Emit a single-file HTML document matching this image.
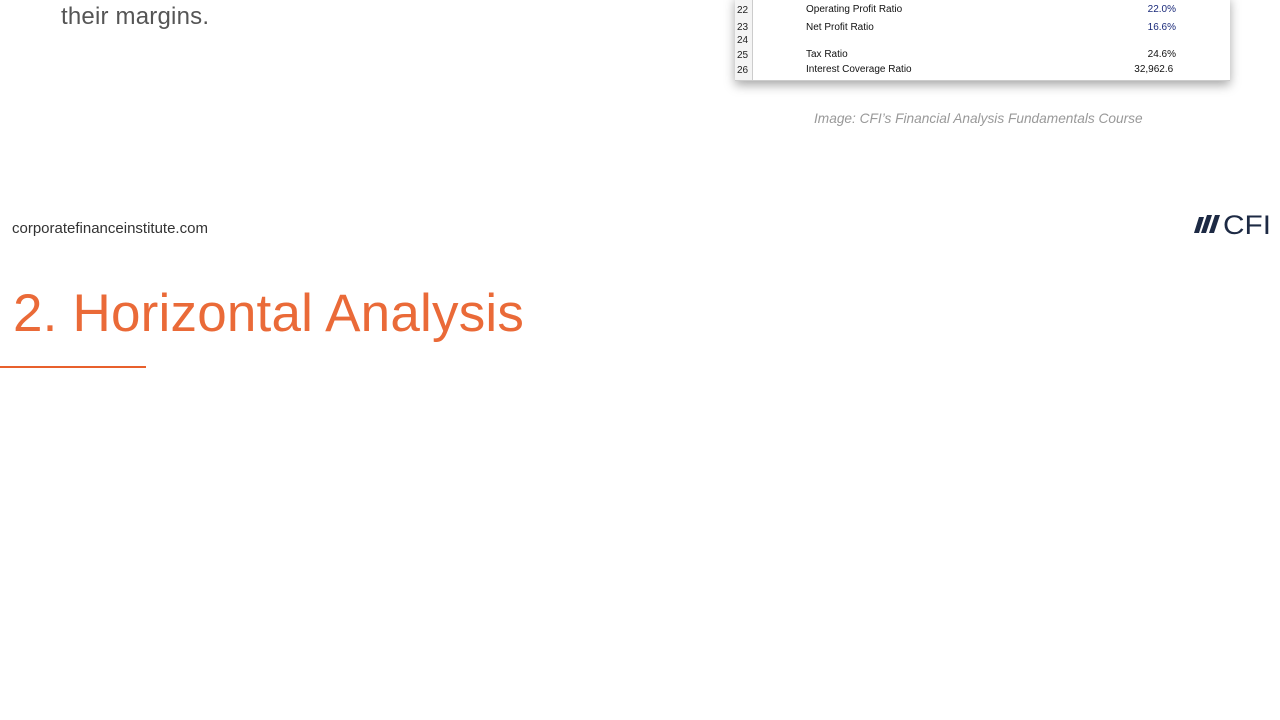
<!DOCTYPE html>
<html><head><meta charset="utf-8"><style>
html,body{margin:0;padding:0;width:1280px;height:720px;background:#fff;overflow:hidden;position:relative;font-family:"Liberation Sans",sans-serif}
.a{position:absolute;white-space:nowrap}
</style></head><body>
<div class="a" style="left:61px;top:3px;font-size:24px;color:#555;letter-spacing:0.2px">their margins.</div>
<div class="a" style="left:735px;top:-4px;width:495px;height:84px;background:#fff;box-shadow:0 4px 10px rgba(0,0,0,0.35);border-bottom:1px solid #ccc"></div>
<div class="a" style="left:735px;top:0;width:17px;height:80px;background:#f4f4f4;border-right:1px solid #ccc"></div>
<div class="a" style="left:737px;top:2px;font-size:10px;color:#222;line-height:17px">22<br>23</div>
<div class="a" style="left:737px;top:33px;font-size:10px;color:#222;line-height:15px">24<br>25<br>26</div>
<div class="a" style="left:806px;top:1px;font-size:10px;color:#111;line-height:17.5px">Operating Profit Ratio<br>Net Profit Ratio</div>
<div class="a" style="left:806px;top:47px;font-size:10px;color:#111;line-height:15px">Tax Ratio<br>Interest Coverage Ratio</div>
<div class="a" style="left:1120px;top:1px;width:56px;text-align:right;font-size:10px;color:#1a2a7a;line-height:17.5px">22.0%<br>16.6%</div>
<div class="a" style="left:1100px;top:47px;width:76px;text-align:right;font-size:10px;color:#111;line-height:15px">24.6%<br>32,962.6&nbsp;</div>
<div class="a" style="left:814px;top:111px;font-size:13.7px;font-style:italic;color:#999">Image: CFI’s Financial Analysis Fundamentals Course</div>
<div class="a" style="left:12px;top:220px;font-size:15px;color:#333">corporatefinanceinstitute.com</div>
<svg class="a" style="left:1192px;top:209px" width="88" height="28" viewBox="0 0 88 28">
<g fill="#1d2a44"><path d="M7 8h5l-5 16h-5z"/><path d="M15 6h5l-6 18h-5z"/><path d="M23 6h5l-6 18h-5z"/></g>
<text x="31" y="25" font-family="Liberation Sans" font-size="27" fill="#1d2a44" textLength="48" lengthAdjust="spacingAndGlyphs">CFI</text>
</svg>
<div class="a" style="left:13px;top:283px;font-size:53px;color:#ea6a38;letter-spacing:0.2px">2. Horizontal Analysis</div>
<div class="a" style="left:0;top:366px;width:146px;height:2px;background:#e8602c"></div>
</body></html>
